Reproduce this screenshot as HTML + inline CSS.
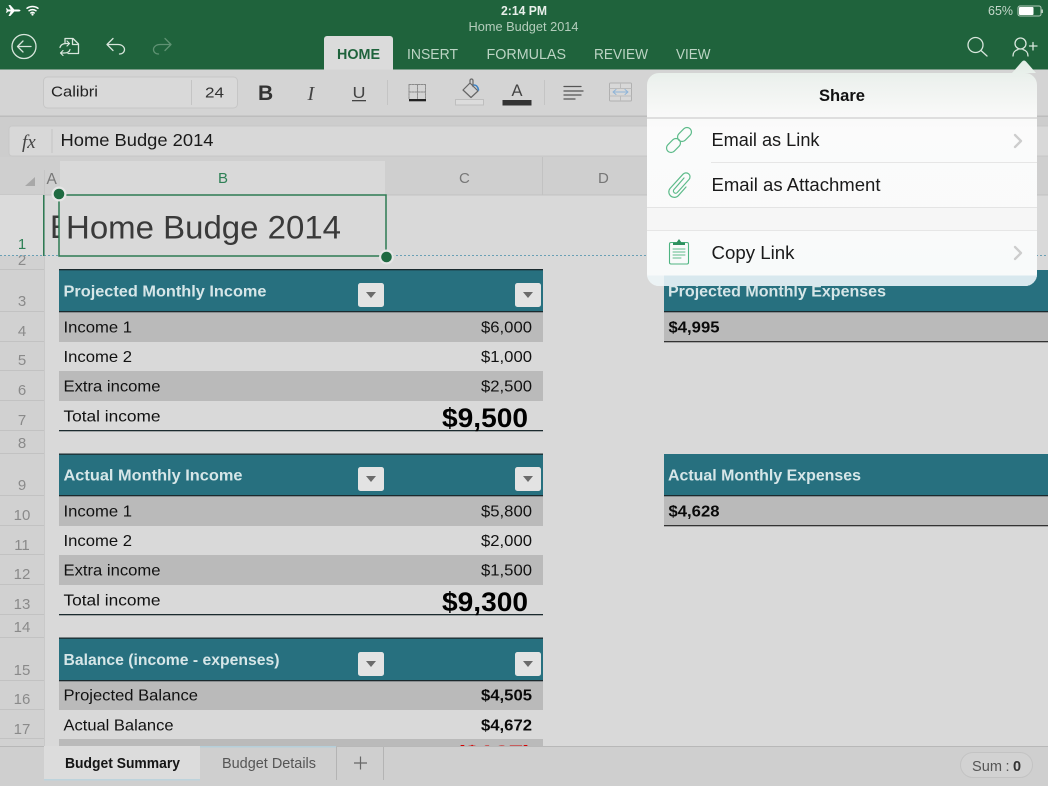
<!DOCTYPE html>
<html><head><meta charset="utf-8"><style>
html,body{margin:0;padding:0;background:#d9d9d9}
svg{display:block;filter:blur(.35px)}
text{font-family:"Liberation Sans",sans-serif}
.c{fill:#111}
.h{fill:#d6e6e8;font-weight:bold}
.r{fill:#8a8a8a;text-anchor:middle;font-size:15px}
.t{fill:#bcd4c4;font-size:14.5px}
.ic{fill:none;stroke-linecap:round;stroke-linejoin:round}
</style></head><body>
<svg width="1048" height="786" viewBox="0 0 1048 786" xmlns="http://www.w3.org/2000/svg">
<defs>
<linearGradient id="pop" x1="0" y1="0" x2="0" y2="1">
<stop offset="0" stop-color="#e2ede6"/><stop offset=".1" stop-color="#eef2ef"/><stop offset=".22" stop-color="#f7f8f7"/><stop offset=".3" stop-color="#fbfbfb"/><stop offset="1" stop-color="#f8fafa"/>
</linearGradient>
<g id="dd"><rect width="26" height="24" rx="2.5" fill="#e3e3e3"/><path d="M8 9h10l-5 6z" fill="#6b6b6b"/></g>
<clipPath id="cl"><rect x="440" y="739" width="100" height="7"/></clipPath>
</defs>

<rect width="1048" height="786" fill="#d9d9d9"/>
<!-- top green -->
<rect width="1048" height="69.5" fill="#1f633c"/>
<!-- status bar -->
<path transform="translate(1.500 0)" d="M7 5h1.800l4 4.500h4.200c1.200 0 2 .5 2 1s-.8 1-2 1h-4.200l-4 4.500H7l2.200-4.500H6.500l-1 1.300H4.500l.7-2.300-.7-2.300h1l1 1.300h2.700z" fill="#fff"/>
<path d="M27 8.200a10 10 0 0 1 11 0M29 10.700a6.500 6.500 0 0 1 7 0M30.800 13a3 3 0 0 1 3.400 0" class="ic" stroke="#fff" stroke-width="1.500"/><circle cx="32.500" cy="14.500" r="1.100" fill="#fff"/>
<text x="524" y="15" text-anchor="middle" font-size="12.500" font-weight="bold" fill="#e8efea" textLength="46" lengthAdjust="spacingAndGlyphs">2:14 PM</text>
<text x="523.500" y="31" text-anchor="middle" font-size="12.500" fill="#b4cdbc" textLength="110" lengthAdjust="spacingAndGlyphs">Home Budget 2014</text>
<text x="988" y="15" font-size="12.500" fill="#c5d8cb" textLength="25" lengthAdjust="spacingAndGlyphs">65%</text>
<rect x="1018" y="6" width="23" height="10" rx="2" fill="none" stroke="#b5cbbc" stroke-width="1"/><rect x="1019" y="7" width="14.500" height="8" rx="1" fill="#fff"/><rect x="1041.500" y="9.500" width="1.500" height="3.500" fill="#b5cbbc"/>

<!-- toolbar top icons -->
<circle cx="24" cy="46.500" r="12" class="ic" stroke="#d8e6dc" stroke-width="1.300"/>
<path d="M31 46.500H18M23 41l-5.500 5.500L23 52" class="ic" stroke="#d8e6dc" stroke-width="1.300"/>
<path d="M65 42.500V38.500h8l5.500 5.500v9.500H68M72.500 38.500V44.500H78.500" class="ic" stroke="#d8e6dc" stroke-width="1.300"/>
<path d="M60 47.500c.5-2.500 3-4 6-4h3.500M67 41l2.500 2.500L67 46M70 49.500c-.5 2.500-3 3.500-6 3.500h-3.500M63 50.500l-2.500 2.500 2.500 2.500" class="ic" stroke="#d8e6dc" stroke-width="1.200"/>
<path d="M113 38.500l-6 6 6 6M107 44.500h11c4 0 6.500 2.500 6.500 5s-2 4.500-5 4.500" class="ic" stroke="#d8e6dc" stroke-width="1.300"/>
<path d="M165 38.500l6 6-6 6M171 44.500h-11c-4 0-6.500 2.500-6.500 5s2 4.500 5 4.500" class="ic" stroke="#5f9273" stroke-width="1.300"/>

<!-- tabs -->
<path d="M324 70V39a3 3 0 0 1 3-3h63a3 3 0 0 1 3 3v31z" fill="#dbdbdb"/>
<text x="337" y="59" font-size="14.500" font-weight="bold" fill="#1f633c" textLength="43" lengthAdjust="spacingAndGlyphs">HOME</text>
<text x="407" y="59" class="t" textLength="51" lengthAdjust="spacingAndGlyphs">INSERT</text>
<text x="486.500" y="59" class="t" textLength="79.500" lengthAdjust="spacingAndGlyphs">FORMULAS</text>
<text x="594" y="59" class="t" textLength="54" lengthAdjust="spacingAndGlyphs">REVIEW</text>
<text x="676" y="59" class="t" textLength="34.500" lengthAdjust="spacingAndGlyphs">VIEW</text>
<circle cx="975.500" cy="45" r="7.500" class="ic" stroke="#d8e6dc" stroke-width="1.300"/><path d="M981 50.500l6 5.500" class="ic" stroke="#d8e6dc" stroke-width="1.300"/>
<circle cx="1020.500" cy="43.500" r="5.500" class="ic" stroke="#d8e6dc" stroke-width="1.300"/><path d="M1013 56c0-4 2-5.500 5-6.500M1028 56c0-4-2-5.500-5-6.500M1033 42.500v7.500M1029.500 46h7.500" class="ic" stroke="#d8e6dc" stroke-width="1.300"/>

<!-- ribbon -->
<rect y="69.500" width="1048" height="46" fill="#d4d4d4"/>
<rect y="115.500" width="1048" height="1.500" fill="#bdbdbd"/>
<rect x="43.500" y="77" width="194" height="31" rx="4" fill="#d9d9d9" stroke="#c6c6c6"/>
<rect x="191" y="80" width="1" height="25" fill="#c4c4c4"/>
<text x="51" y="96.500" font-size="15" fill="#222" textLength="47" lengthAdjust="spacingAndGlyphs">Calibri</text>
<text x="205" y="97.500" font-size="15" fill="#333" textLength="19" lengthAdjust="spacingAndGlyphs">24</text>
<text x="258" y="100" font-size="21" font-weight="bold" fill="#333">B</text>
<text x="307.500" y="100" font-size="20" font-style="italic" fill="#444" style="font-family:'Liberation Serif',serif">I</text>
<text x="352.500" y="98" font-size="16" fill="#444" textLength="13" lengthAdjust="spacingAndGlyphs">U</text>
<rect x="352" y="100" width="14" height="1.300" fill="#444"/>
<rect x="387" y="80" width="1" height="25" fill="#c4c4c4"/>
<path d="M409 84.500h16.500M409 84.500v15M425.500 84.500v15M417.500 84.500v15M409 92h16.500" class="ic" stroke="#8a8a8a" stroke-width="1" stroke-dasharray="2 1"/>
<rect x="409" y="99" width="17" height="2.300" fill="#222"/>
<path d="M463 90l7-7 8 8-7 6.500zM470 83v-2.500a1.500 1.500 0 0 1 3 0v6" class="ic" stroke="#666" stroke-width="1.200"/><path d="M474 85c2.500 0 4 2 4.500 5" class="ic" stroke="#3f83c5" stroke-width="1.600"/>
<rect x="455.500" y="99.500" width="28" height="5.500" fill="#dcdcdc" stroke="#bebebe"/>
<text x="511.500" y="96" font-size="17" fill="#444" textLength="11" lengthAdjust="spacingAndGlyphs">A</text>
<rect x="502.500" y="100" width="29" height="5.500" fill="#333"/>
<rect x="544" y="80" width="1" height="25" fill="#c4c4c4"/>
<path d="M564 86.500h17M564 91h19M564 95h17M564 99h11" class="ic" stroke="#555" stroke-width="1.300"/>
<rect x="609.500" y="83" width="22" height="18" rx="1" fill="#d8d8d8" stroke="#b0b0b0"/>
<path d="M609.500 88.500h22M609.500 96h22M620.500 83v5M620.500 96v5" stroke="#bbb" fill="none"/>
<path d="M613 92h15M616 89.500l-3 2.500 3 2.500M625 89.500l3 2.500-3 2.500" class="ic" stroke="#8eb4d8" stroke-width="1"/>

<!-- formula bar -->
<rect y="117" width="1048" height="40" fill="#cdcdcd"/>
<rect x="9" y="126" width="1050" height="30" rx="3" fill="#d8d8d8" stroke="#c8c8c8"/>
<rect x="51.500" y="129" width="1" height="24" fill="#c4c4c4"/>
<text x="22" y="148" font-size="19" font-style="italic" fill="#444" style="font-family:'Liberation Serif',serif">fx</text>
<text x="60.500" y="146" font-size="17.500" fill="#1a1a1a" textLength="153" lengthAdjust="spacingAndGlyphs">Home Budge 2014</text>

<!-- column headers -->
<rect y="157" width="1048" height="38" fill="#cfcfcf"/>
<rect x="60" y="161" width="325" height="34" fill="#d9d9d9"/>
<rect x="0" y="194.500" width="1048" height="1" fill="#c2c2c2"/>
<path d="M25 186l10-9v9z" fill="#a8a8a8"/>
<rect x="44" y="170" width="1" height="25" fill="#c6c6c6"/>
<rect x="542" y="157" width="1" height="38" fill="#c2c2c2"/>
<text x="46.500" y="184" font-size="15.500" fill="#777">A</text>
<text x="218" y="183" font-size="15" fill="#2e8056">B</text>
<text x="459" y="183" font-size="15" fill="#777">C</text>
<text x="598" y="183" font-size="15" fill="#777">D</text>

<!-- row headers -->
<rect y="195" width="44" height="551" fill="#d1d1d1"/>
<rect x="44" y="195" width="1" height="551" fill="#c9c9c9"/>
<g fill="#c2c2c2">
<rect y="269" width="44" height="1"/><rect y="311" width="44" height="1"/><rect y="341" width="44" height="1"/><rect y="370" width="44" height="1"/><rect y="400" width="44" height="1"/><rect y="430" width="44" height="1"/><rect y="453" width="44" height="1"/><rect y="495" width="44" height="1"/><rect y="525" width="44" height="1"/><rect y="554" width="44" height="1"/><rect y="584" width="44" height="1"/><rect y="614" width="44" height="1"/><rect y="637" width="44" height="1"/><rect y="680" width="44" height="1"/><rect y="709" width="44" height="1"/><rect y="738" width="44" height="1"/>
</g>
<text x="22" y="265" class="r">2</text>
<rect x="0" y="195" width="44" height="60.500" fill="#dbdbdb"/>
<text x="22" y="249" class="r" style="fill:#2e8056">1</text>
<text x="22" y="306" class="r">3</text><text x="22" y="336" class="r">4</text><text x="22" y="365" class="r">5</text><text x="22" y="395" class="r">6</text><text x="22" y="425" class="r">7</text><text x="22" y="448" class="r">8</text><text x="22" y="490" class="r">9</text><text x="22" y="520" class="r">10</text><text x="22" y="550" class="r">11</text><text x="22" y="579" class="r">12</text><text x="22" y="609" class="r">13</text><text x="22" y="632" class="r">14</text><text x="22" y="675" class="r">15</text><text x="22" y="704" class="r">16</text><text x="22" y="734" class="r">17</text>

<!-- table bands -->
<g fill="#bababa">
<rect x="59" y="312" width="484" height="30"/><rect x="59" y="371" width="484" height="30"/>
<rect x="59" y="496" width="484" height="30"/><rect x="59" y="555" width="484" height="30"/>
<rect x="59" y="681" width="484" height="29"/><rect x="59" y="739" width="484" height="7"/>
<rect x="664" y="312" width="384" height="30"/><rect x="664" y="496" width="384" height="30"/>
</g>
<g fill="#27707f">
<rect x="59" y="270" width="484" height="42"/><rect x="59" y="454" width="484" height="42"/><rect x="59" y="638" width="484" height="43"/>
<rect x="664" y="270" width="384" height="42"/><rect x="664" y="454" width="384" height="42"/>
</g>
<g fill="#1b2a2e">
<rect x="59" y="269" width="484" height="1.300"/><rect x="59" y="311" width="484" height="1.300"/><rect x="59" y="453.500" width="484" height="1.300"/><rect x="59" y="495" width="484" height="1.300"/><rect x="59" y="637.500" width="484" height="1.300"/><rect x="59" y="680" width="484" height="1.300"/>
<rect x="664" y="311" width="384" height="1.300"/><rect x="664" y="495" width="384" height="1.300"/>
<rect x="59" y="430" width="484" height="1.300"/><rect x="59" y="614" width="484" height="1.300"/>
<rect x="664" y="341" width="384" height="1.300" fill="#333"/><rect x="664" y="525" width="384" height="1.300" fill="#333"/>
</g>
<use href="#dd" x="358" y="283"/><use href="#dd" x="515" y="283"/>
<use href="#dd" x="358" y="467"/><use href="#dd" x="515" y="467"/>
<use href="#dd" x="358" y="652"/><use href="#dd" x="515" y="652"/>

<!-- table text -->
<text x="63.500" y="296.500" class="h" font-size="16" textLength="203" lengthAdjust="spacingAndGlyphs">Projected Monthly Income</text>
<text x="63.500" y="480.500" class="h" font-size="16" textLength="179" lengthAdjust="spacingAndGlyphs">Actual Monthly Income</text>
<text x="63.500" y="665" class="h" font-size="16" textLength="216" lengthAdjust="spacingAndGlyphs">Balance (income - expenses)</text>
<text x="668" y="480.500" class="h" font-size="16" textLength="193" lengthAdjust="spacingAndGlyphs">Actual Monthly Expenses</text>
<text x="668" y="296.500" class="h" font-size="16" textLength="218" lengthAdjust="spacingAndGlyphs">Projected Monthly Expenses</text>

<g font-size="16" class="c">
<text x="63.500" y="332.500" textLength="68.500" lengthAdjust="spacingAndGlyphs">Income 1</text>
<text x="63.500" y="362" textLength="68.500" lengthAdjust="spacingAndGlyphs">Income 2</text>
<text x="63.500" y="391.500" textLength="97" lengthAdjust="spacingAndGlyphs">Extra income</text>
<text x="63.500" y="421.500" textLength="97" lengthAdjust="spacingAndGlyphs">Total income</text>
<text x="63.500" y="516.500" textLength="68.500" lengthAdjust="spacingAndGlyphs">Income 1</text>
<text x="63.500" y="546" textLength="68.500" lengthAdjust="spacingAndGlyphs">Income 2</text>
<text x="63.500" y="575.500" textLength="97" lengthAdjust="spacingAndGlyphs">Extra income</text>
<text x="63.500" y="605.500" textLength="97" lengthAdjust="spacingAndGlyphs">Total income</text>
<text x="63.500" y="700.500" textLength="134.500" lengthAdjust="spacingAndGlyphs">Projected Balance</text>
<text x="63.500" y="730.500" textLength="110" lengthAdjust="spacingAndGlyphs">Actual Balance</text>
<text x="481" y="332.500" textLength="51" lengthAdjust="spacingAndGlyphs">$6,000</text>
<text x="481" y="362" textLength="51" lengthAdjust="spacingAndGlyphs">$1,000</text>
<text x="481" y="391.500" textLength="51" lengthAdjust="spacingAndGlyphs">$2,500</text>
<text x="481" y="516.500" textLength="51" lengthAdjust="spacingAndGlyphs">$5,800</text>
<text x="481" y="546" textLength="51" lengthAdjust="spacingAndGlyphs">$2,000</text>
<text x="481" y="575.500" textLength="51" lengthAdjust="spacingAndGlyphs">$1,500</text>
</g>
<g font-size="16" font-weight="bold" fill="#0a0a0a">
<text x="481" y="700.500" textLength="51" lengthAdjust="spacingAndGlyphs">$4,505</text>
<text x="481" y="730.500" textLength="51" lengthAdjust="spacingAndGlyphs">$4,672</text>
<text x="668.500" y="332.500" textLength="51" lengthAdjust="spacingAndGlyphs">$4,995</text>
<text x="668.500" y="516.500" textLength="51" lengthAdjust="spacingAndGlyphs">$4,628</text>
</g>
<g font-size="27" font-weight="bold" fill="#000">
<text x="442" y="427" textLength="86" lengthAdjust="spacingAndGlyphs">$9,500</text>
<text x="442" y="611" textLength="86" lengthAdjust="spacingAndGlyphs">$9,300</text>
</g>
<g clip-path="url(#cl)"><text x="456" y="757" font-size="17" font-weight="bold" fill="#d40000" textLength="76" lengthAdjust="spacingAndGlyphs">($167)</text></g>

<!-- page break dotted line -->
<path d="M0 255.500H1048" stroke="#6aa0b5" stroke-width="1" stroke-dasharray="2 2" fill="none"/>

<!-- selection -->
<rect x="43" y="195" width="1.500" height="61" fill="#2d7a52"/>
<text x="50" y="238" font-size="32" fill="#3a3a3a">E</text>
<rect x="59" y="195" width="327" height="61" fill="#d9d9d9" stroke="#2d7a52" stroke-width="1.500"/>
<text x="66" y="238.500" font-size="32" fill="#3a3a3a" textLength="275" lengthAdjust="spacingAndGlyphs">Home Budge 2014</text>
<circle cx="59" cy="194" r="7.500" fill="#e6e6e6"/><circle cx="59" cy="194" r="5.300" fill="#1f6a41"/>
<circle cx="386.500" cy="257" r="7.500" fill="#e6e6e6"/><circle cx="386.500" cy="257" r="5.300" fill="#1f6a41"/>

<!-- bottom bar -->
<rect y="746" width="1048" height="40" fill="#cfcfcf"/>
<rect y="746" width="1048" height="1" fill="#b8b8b8"/>
<rect x="44" y="746" width="156" height="34" fill="#dcdcdc"/>
<rect x="44" y="779" width="156" height="1.500" fill="#bdd3dc"/>
<rect x="200" y="746" width="136" height="1.500" fill="#b5cfda"/>
<rect x="336" y="747" width="1" height="33" fill="#b4b4b4"/><rect x="383" y="747" width="1" height="33" fill="#b4b4b4"/>
<text x="65" y="768" font-size="14.500" font-weight="bold" fill="#151515" textLength="115" lengthAdjust="spacingAndGlyphs">Budget Summary</text>
<text x="222" y="768" font-size="14.500" fill="#555" textLength="94" lengthAdjust="spacingAndGlyphs">Budget Details</text>
<path d="M354 763h13M360.500 756.500v13" stroke="#666" stroke-width="1.200" fill="none"/>
<rect x="960.500" y="752.500" width="72" height="25" rx="12.500" fill="#d2d2d2" stroke="#c3c3c3"/>
<text x="972" y="771" font-size="14.500" fill="#555" textLength="30" lengthAdjust="spacingAndGlyphs">Sum</text>
<text x="1005.500" y="771" font-size="14.500" fill="#555">:</text>
<text x="1013" y="771" font-size="14.500" font-weight="bold" fill="#333">0</text>

<!-- popover -->
<path d="M659 73H1012L1022 61.500q2-2 4 0L1036 73H1025a12 12 0 0 1 12 12V274a12 12 0 0 1-12 12H659a12 12 0 0 1-12-12V85a12 12 0 0 1 12-12z" fill="url(#pop)"/>
<rect x="647" y="117" width="390" height="2" fill="#dedede"/>
<rect x="711" y="162" width="326" height="1" fill="#e6e6e6"/>
<rect x="647" y="207" width="390" height="1" fill="#e4e4e4"/>
<rect x="647" y="208" width="390" height="22" fill="#f6f6f6"/>
<rect x="647" y="230" width="390" height="1" fill="#e6e6e6"/>
<path d="M647 275.500H1037V274a12 12 0 0 1-12 12H659a12 12 0 0 1-12-12z" fill="#ecf3f5"/>
<path d="M664 275.500H1037V274a12 12 0 0 1-12 12H664z" fill="#d8e8ee"/>
<text x="842" y="101" text-anchor="middle" font-size="16.500" font-weight="bold" fill="#111" textLength="46" lengthAdjust="spacingAndGlyphs">Share</text>
<text x="711.500" y="146" font-size="18" fill="#1a1a1a" textLength="108" lengthAdjust="spacingAndGlyphs">Email as Link</text>
<text x="711.500" y="191" font-size="18" fill="#1a1a1a" textLength="169" lengthAdjust="spacingAndGlyphs">Email as Attachment</text>
<text x="711.500" y="259" font-size="18" fill="#1a1a1a" textLength="83" lengthAdjust="spacingAndGlyphs">Copy Link</text>
<path d="M1015 135l6 6-6 6M1015 247l6 6-6 6" class="ic" stroke="#cdcdcd" stroke-width="2.300"/>
<g class="ic" stroke="#5dbb8a" stroke-width="1.200">
<rect x="-8" y="-4.500" width="16" height="9" rx="4.500" transform="translate(684.500 134.500) rotate(-45)"/>
<rect x="-8" y="-4.500" width="16" height="9" rx="4.500" transform="translate(673.500 145.500) rotate(-45)"/>
<path d="M684 178L674 189.500a2.200 2.200 0 0 0 3.300 3L689 179.500a4 4 0 0 0-6-5.300L670 188.500a5.500 5.500 0 0 0 8.200 7.300L686 187"/>
</g>
<rect x="669.500" y="242.500" width="19" height="21.500" rx="1.500" fill="none" stroke="#4fb482" stroke-width="1.100"/>
<path d="M673 245v-2.500h3.500l2.500-3.500 2.500 3.500h3.500v2.500z" fill="#2d8f5e"/>
<path d="M673 249h12M673 252h12M673 255h12M673 258h8" class="ic" stroke="#5dbb8a" stroke-width="1"/>
</svg>
</body></html>
